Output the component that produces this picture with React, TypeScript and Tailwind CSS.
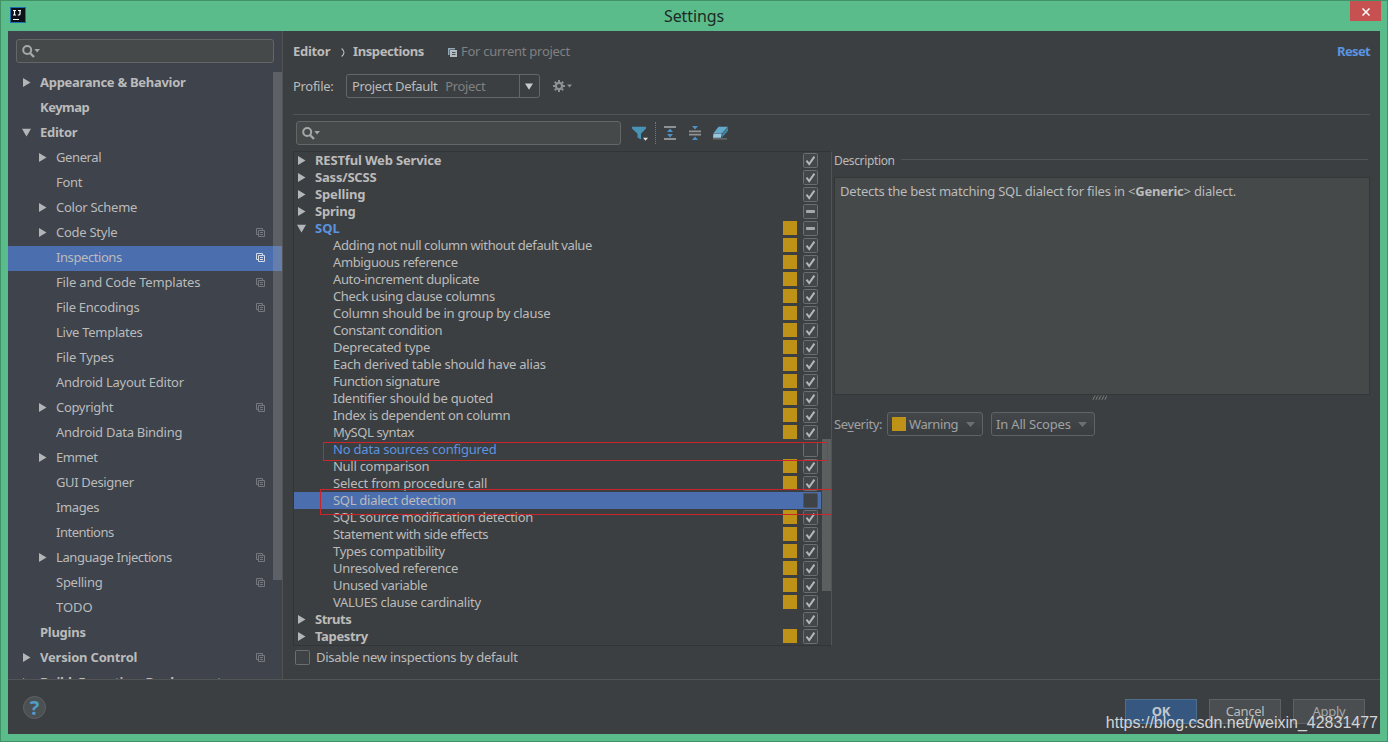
import React from "react";

type Node = { label: string; level: 1 | 2; arrow?: "right" | "down"; copy?: boolean; selected?: boolean; track?: string };

const tree: Node[] = [
  { label: "Appearance & Behavior", level: 1, arrow: "right", track: "tracking-[-0.29px]" },
  { label: "Keymap", level: 1, track: "tracking-[-0.5px]" },
  { label: "Editor", level: 1, arrow: "down" },
  { label: "General", level: 2, arrow: "right", track: "tracking-[-0.4px]" },
  { label: "Font", level: 2 },
  { label: "Color Scheme", level: 2, arrow: "right" },
  { label: "Code Style", level: 2, arrow: "right", copy: true },
  { label: "Inspections", level: 2, copy: true, selected: true, track: "tracking-[-0.42px]" },
  { label: "File and Code Templates", level: 2, copy: true, track: "tracking-[-0.18px]" },
  { label: "File Encodings", level: 2, copy: true },
  { label: "Live Templates", level: 2 },
  { label: "File Types", level: 2, track: "tracking-[-0.15px]" },
  { label: "Android Layout Editor", level: 2 },
  { label: "Copyright", level: 2, arrow: "right", copy: true, track: "tracking-[-0.32px]" },
  { label: "Android Data Binding", level: 2 },
  { label: "Emmet", level: 2, arrow: "right", track: "tracking-[-0.4px]" },
  { label: "GUI Designer", level: 2, copy: true, track: "tracking-[-0.35px]" },
  { label: "Images", level: 2, track: "tracking-[-0.4px]" },
  { label: "Intentions", level: 2, track: "tracking-[-0.5px]" },
  { label: "Language Injections", level: 2, arrow: "right", copy: true, track: "tracking-[-0.42px]" },
  { label: "Spelling", level: 2, copy: true },
  { label: "TODO", level: 2, track: "tracking-normal" },
  { label: "Plugins", level: 1 },
  { label: "Version Control", level: 1, arrow: "right", copy: true, track: "tracking-[-0.2px]" },
  { label: "Build, Execution, Deployment", level: 1, arrow: "right", track: "tracking-[-0.29px]" },
];

type State = "on" | "off" | "mixed";
type Row = { label: string; group?: "right" | "down"; warn?: boolean; state: State; blue?: boolean; selected?: boolean; track?: string };

const rows: Row[] = [
  { label: "RESTful Web Service", group: "right", state: "on", track: "tracking-[-0.16px]" },
  { label: "Sass/SCSS", group: "right", state: "on", track: "tracking-[-0.2px]" },
  { label: "Spelling", group: "right", state: "on", track: "tracking-[-0.15px]" },
  { label: "Spring", group: "right", state: "mixed", track: "tracking-[-0.2px]" },
  { label: "SQL", group: "down", state: "mixed", warn: true, blue: true, track: "tracking-normal" },
  { label: "Adding not null column without default value", warn: true, state: "on", track: "tracking-[-0.38px]" },
  { label: "Ambiguous reference", warn: true, state: "on", track: "tracking-[-0.37px]" },
  { label: "Auto-increment duplicate", warn: true, state: "on", track: "tracking-[-0.37px]" },
  { label: "Check using clause columns", warn: true, state: "on", track: "tracking-[-0.35px]" },
  { label: "Column should be in group by clause", warn: true, state: "on" },
  { label: "Constant condition", warn: true, state: "on", track: "tracking-[-0.38px]" },
  { label: "Deprecated type", warn: true, state: "on" },
  { label: "Each derived table should have alias", warn: true, state: "on", track: "tracking-[-0.22px]" },
  { label: "Function signature", warn: true, state: "on", track: "tracking-[-0.43px]" },
  { label: "Identifier should be quoted", warn: true, state: "on", track: "tracking-[-0.27px]" },
  { label: "Index is dependent on column", warn: true, state: "on", track: "tracking-[-0.31px]" },
  { label: "MySQL syntax", warn: true, state: "on", track: "tracking-[-0.4px]" },
  { label: "No data sources configured", state: "off", blue: true, track: "tracking-[-0.2px]" },
  { label: "Null comparison", warn: true, state: "on", track: "tracking-[-0.27px]" },
  { label: "Select from procedure call", warn: true, state: "on", track: "tracking-[-0.19px]" },
  { label: "SQL dialect detection", state: "off", selected: true, track: "tracking-[-0.28px]" },
  { label: "SQL source modification detection", warn: true, state: "on", track: "tracking-[-0.28px]" },
  { label: "Statement with side effects", warn: true, state: "on", track: "tracking-[-0.38px]" },
  { label: "Types compatibility", warn: true, state: "on", track: "tracking-[-0.3px]" },
  { label: "Unresolved reference", warn: true, state: "on", track: "tracking-[-0.3px]" },
  { label: "Unused variable", warn: true, state: "on", track: "tracking-[-0.33px]" },
  { label: "VALUES clause cardinality", warn: true, state: "on", track: "tracking-[-0.28px]" },
  { label: "Struts", group: "right", state: "on", track: "tracking-[-0.5px]" },
  { label: "Tapestry", group: "right", warn: true, state: "on", track: "tracking-[-0.36px]" },
];

function Arrow({ dir }: { dir?: "right" | "down" }) {
  return (
    <svg className="size-[9px] shrink-0" viewBox="0 0 9 9" fill="#b3b5b7">
      {dir === "right" && <path d="M1 0L8.5 4.5L1 9Z" />}
      {dir === "down" && <path d="M0 .8H9L4.5 8.6Z" />}
    </svg>
  );
}

function CopyIcon({ color }: { color: string }) {
  return (
    <svg className="size-[9px] shrink-0" viewBox="0 0 9 9" fill="none" stroke={color} strokeWidth="1">
      <path d="M2 6.5H.5V.5H6.5V2" />
      <path d="M2.5 2.5H8.5V8.5H2.5ZM4 4.5H7M4 6.5H7" />
    </svg>
  );
}

function ProjectIcon() {
  return (
    <svg className="size-[9px] shrink-0" viewBox="0 0 9 9">
      <path d="M0 0H7V1.5H1.5V7H0Z" fill="#8fa9b8" />
      <path d="M2 2H9V9H2Z" fill="#b4bcc2" />
      <path d="M4 4.5H7.5M4 6.5H7.5" stroke="#4c5357" />
    </svg>
  );
}

function SearchIcon() {
  return (
    <svg className="h-[13px] w-[19px] shrink-0" viewBox="0 0 19 13" fill="none">
      <circle cx="5.2" cy="5" r="4" stroke="#a5a7a9" strokeWidth="2" />
      <path d="M8 8L12 12" stroke="#a5a7a9" strokeWidth="2.4" />
      <path d="M12.3 4H18L15.1 7.6Z" fill="#a5a7a9" />
    </svg>
  );
}

function Check({ state, selected }: { state: State; selected?: boolean }) {
  return (
    <svg className="size-[15px] shrink-0" viewBox="0 0 15 15" fill="none">
      <rect x=".5" y=".5" width="14" height="14" rx="1" fill={state === "off" ? "#3f4346" : "#43474a"} stroke={selected ? "#50545a" : "#6b6e70"} />
      {state === "on" && <path d="M3.5 7.6L6.2 11L11.4 3.6" stroke="#b4b6b8" strokeWidth="2" />}
      {state === "mixed" && <rect x="3" y="6" width="9" height="3" rx="1" fill="#a6a8aa" />}
    </svg>
  );
}

function TitleBar() {
  return (
    <div className="relative flex h-[30px] shrink-0 items-center justify-center text-[16px] tracking-[-0.1px] text-[#1c2b25]">
      <svg className="absolute top-1.5 left-[9px] size-4" viewBox="0 0 16 16">
        <rect x=".5" y=".5" width="15" height="15" fill="#0c1118" stroke="#1b6fae" />
        <path d="M3 3.5H6M4.5 3.5V8M3 8H6M8 3.5H11M10 3.5V7Q10 8 8.8 8H7.8M3 12.5H9" stroke="#fff" strokeWidth="1.2" fill="none" />
      </svg>
      <span>Settings</span>
      <div className="absolute top-0 right-1.5 flex h-5 w-[31px] items-center justify-center bg-[#c75050]">
        <svg className="mt-0.5 size-[8px]" viewBox="0 0 8 8" stroke="#fff" strokeWidth="1.5"><path d="M.5 .5L7.5 7.5M7.5 .5L.5 7.5" /></svg>
      </div>
    </div>
  );
}

function Sidebar() {
  return (
    <aside className="relative flex w-[275px] shrink-0 flex-col overflow-hidden border-r border-[#515355] bg-[#3e434c]">
      <div className="mx-2 mt-2 mb-2 flex h-6 w-[258px] shrink-0 items-center rounded-[3px] border border-[#646668] bg-[#45494a] pl-[5px]">
        <SearchIcon />
      </div>
      {tree.map((n) => (
        <div
          key={n.label}
          className={`flex h-[25px] shrink-0 items-center pb-0.5 pr-[17px] ${n.level === 1 ? "pl-3.5 font-bold" : "pl-[30px]"} ${n.selected ? "bg-[#4b6eaf]" : ""}`}
        >
          <Arrow dir={n.arrow} />
          <span className={`ml-[9px] flex-1 whitespace-nowrap ${n.track ?? "tracking-[-0.26px]"}`}>{n.label}</span>
          {n.copy && <CopyIcon color={n.selected ? "#d5dbe6" : "#75797f"} />}
        </div>
      ))}
      <div className="absolute top-[41px] right-0 h-[508px] w-[9px] bg-[#a6a6a6]/30" />
    </aside>
  );
}

function InspectionList() {
  return (
    <div className="relative h-[495px] w-[539px] border border-[#323435] border-r-[#515355]">
      {rows.map((r) => (
        <div
          key={r.label}
          className={`flex h-[17px] w-[527px] items-center pr-[3px] ${r.group ? "pl-[3px] font-bold" : "pl-[39px]"} ${r.selected ? "bg-[#4b6eaf]" : ""} ${r.blue ? "text-[#5a94e0]" : ""}`}
        >
          {r.group && <span className="mr-[9px] flex"><Arrow dir={r.group} /></span>}
          <span className={`flex-1 leading-[17px] whitespace-nowrap ${r.track ?? "tracking-[-0.25px]"}`}>{r.label}</span>
          {r.warn && <span className="mr-1.5 mb-px size-3.5 bg-[#be9117]" />}
          <Check state={r.state} selected={r.selected} />
        </div>
      ))}
      <div className="absolute top-[287px] right-0 h-[152px] w-[9px] bg-[#5b5f60]" />
      <div className="absolute top-[290px] left-[29px] h-[19px] w-[505px] border border-[#c9252b]" />
      <div className="absolute top-[337px] left-[26px] h-[26px] w-[512px] border border-[#c9252b]" />
    </div>
  );
}

function Toolbar() {
  return (
    <div className="mt-1.5 ml-[3px] flex h-6 items-center">
      <div className="flex h-6 w-[325px] items-center rounded-[3px] border border-[#646668] bg-[#45494a] pl-[5px]">
        <SearchIcon />
      </div>
      <svg className="ml-[11px] h-[15px] w-4" viewBox="0 0 16 15">
        <path d="M0 .8H14V2.6L9 7.8V13.4L5.5 11.4V7.8L0 2.6Z" fill="#4793b5" />
        <path d="M11 11.8H16L13.5 14.8Z" fill="#e0e2e3" />
      </svg>
      <div className="ml-[7px] h-[22px] w-px border-l border-dotted border-[#747677]" />
      <svg className="ml-2 h-[14px] w-3" viewBox="0 0 12 14">
        <path d="M0 0H12V2H0ZM0 12H12V14H0Z" fill="#8f9193" />
        <path d="M6 2.6L9 6H3ZM3 8H9L6 11.4Z" fill="#4d8fc4" />
      </svg>
      <svg className="ml-[13px] h-[14px] w-3" viewBox="0 0 12 14">
        <path d="M0 4.4H12V6.2H0ZM0 7.8H12V9.6H0Z" fill="#8f9193" />
        <path d="M3 0H9L6 3.6ZM6 10.4L9 14H3Z" fill="#4d8fc4" />
      </svg>
      <svg className="ml-3 h-[14px] w-[15px]" viewBox="0 0 15 14">
        <path d="M5.5 .8H15L9.3 7H.7Z" fill="#62a9cc" />
        <path d="M.5 7.6H8.8L8 11.8H0Z" fill="#97c8e0" />
        <path d="M9.5 7.5L15 1.6V4.8L8.7 11.8Z" fill="#3f86ab" />
        <path d="M0 12.5H14V13.3H0Z" fill="#8d8f90" />
      </svg>
    </div>
  );
}

function Combo({ children, className }: { children: React.ReactNode; className: string }) {
  return (
    <div className={`flex h-6 items-center rounded-[3px] border border-[#606264] bg-linear-to-b from-[#434749] to-[#3b3e40] text-[#9fa1a3] ${className}`}>
      {children}
      <svg className="ml-auto h-[5px] w-[9px]" viewBox="0 0 9 5" fill="#6d6f71"><path d="M0 0H9L4.5 5Z" /></svg>
    </div>
  );
}

function Details() {
  return (
    <section className="ml-0.5 flex w-[536px] flex-col">
      <div className="flex h-[18px] items-center">
        <span className="pt-0.5 text-[12px] tracking-[-0.36px]">Description</span>
        <span className="mr-0.5 mb-px ml-1.5 h-px flex-1 bg-[#515355]" />
      </div>
      <div className="mt-2 h-[218px] border border-[#343637] bg-[#45494a] px-[5px] pt-[5px] leading-[17px] tracking-[-0.21px]">
        Detects the best matching SQL dialect for files in &lt;<b>Generic</b>&gt; dialect.
      </div>
      <svg className="ml-[258px] h-[5px] w-[15px]" viewBox="0 0 15 5" stroke="#a8aaab" strokeWidth="1">
        <path d="M1 4.5L3 .5M4 4.5L6 .5M7 4.5L9 .5M10 4.5L12 .5M13 4.5L15 .5" strokeDasharray="1.2 .8" />
      </svg>
      <div className="mt-3 flex items-center text-[#9fa1a3]">
        <span className="w-[53px] pt-px tracking-[-0.4px]">Se<u className="underline-offset-2">v</u>erity:</span>
        <Combo className="w-24 pr-[7px] pl-1">
          <span className="mr-[3px] size-3.5 bg-[#be9117]" />
          <span className="pt-px tracking-[-0.4px]">Warning</span>
        </Combo>
        <Combo className="ml-2 w-[104px] pr-[7px] pl-1">
          <span className="pt-px tracking-[-0.18px]">In All Scopes</span>
        </Combo>
      </div>
    </section>
  );
}

function Main() {
  return (
    <main className="flex min-w-0 flex-1 flex-col pr-2.5 pl-2.5">
      <div className="mt-[11px] flex h-5 items-center font-bold">
        <span className="w-[37px] tracking-[-0.3px]">Editor</span>
        <svg className="mr-2 ml-[11px] h-[9px] w-1" viewBox="0 0 4 9" fill="none" stroke="#bbb" strokeWidth="1.1"><path d="M.6 .5Q3 2.5 3 4.5Q3 6.5 .6 8.5" /></svg>
        <span className="w-[71px] tracking-[-0.4px]">Inspections</span>
        <span className="mr-1 ml-6 flex"><ProjectIcon /></span>
        <span className="font-normal tracking-[-0.27px] text-[#7f8183]">For current project</span>
        <span className="ml-auto tracking-[-0.65px] text-[#5a94e0]">Reset</span>
      </div>
      <div className="mt-3 flex h-6 items-center">
        <span className="w-[53px] pt-px tracking-[-0.3px]">Profile:</span>
        <div className="flex h-6 w-[194px] items-center rounded-[3px] border border-[#646668]">
          <span className="w-[173px] border-r border-[#646668] pl-[5px] leading-[22px] tracking-[-0.35px] whitespace-nowrap">
            Project Default<span className="ml-2 text-[#7f8183]">Project</span>
          </span>
          <svg className="ml-[5px] h-[7px] w-2" viewBox="0 0 8 7" fill="#c8cacb"><path d="M0 .5H8L4 6.8Z" /></svg>
        </div>
        <svg className="ml-[13px] h-3 w-5" viewBox="0 0 20 12">
          <g fill="none" stroke="#8e9092">
            <circle cx="6" cy="6" r="3.1" strokeWidth="2.2" />
            <path d="M6 0V2M6 10V12M0 6H2M10 6H12M1.8 1.8L3.2 3.2M8.8 8.8L10.2 10.2M10.2 1.8L8.8 3.2M3.2 8.8L1.8 10.2" strokeWidth="2" />
          </g>
          <path d="M14 4.6H19L16.5 7.4Z" fill="#8e9092" />
        </svg>
      </div>
      <div className="mt-4 h-px shrink-0 bg-[#515355]" />
      <Toolbar />
      <div className="mt-1.5 flex">
        <InspectionList />
        <Details />
      </div>
      <div className="mt-1 ml-0.5 flex items-center gap-1.5">
        <Check state="off" />
        <span className="leading-[15px] tracking-[-0.27px]">Disable new inspections by default</span>
      </div>
    </main>
  );
}

function Footer() {
  const button = "flex h-[25px] w-[72px] items-center justify-center border tracking-[-0.3px]";
  return (
    <footer className="flex h-[55px] shrink-0 items-start border-t border-[#515355] pr-[15px] pl-[15px]">
      <div className="mt-4 flex size-[23px] items-center justify-center rounded-full border border-[#5f6365] bg-[#4b5053] text-[20px] font-bold text-[#529cc6]">?</div>
      <div className="mt-[19px] ml-auto flex gap-3">
        <div className={`${button} border-[#4c708c] bg-[#365880] font-bold text-[#c4c8ce]`}>OK</div>
        <div className={`${button} border-[#5e6062] bg-[#4a4e50]`}>Cancel</div>
        <div className={`${button} border-[#5e6062] bg-[#4a4e50] text-[#a4a6a8]`}>Apply</div>
      </div>
    </footer>
  );
}

export default function App() {
  return (
    <div className="relative flex h-[742px] w-[1388px] flex-col overflow-hidden border border-[#429268] bg-[#5bbc8b] font-['Noto_Sans','Noto_Sans_CJK_SC',sans-serif] text-[13px] text-[#bbbbbb]">
      <TitleBar />
      <div className="mx-[7px] flex h-[703px] flex-col bg-[#3c3f41]">
        <div className="flex h-[648px] overflow-hidden">
          <Sidebar />
          <Main />
        </div>
        <Footer />
      </div>
      <div className="absolute right-[9px] bottom-[9px] font-['Liberation_Sans',sans-serif] text-[16px] leading-[19px] whitespace-nowrap text-[#d3d4d5]">
        https://blog.csdn.net/weixin_42831477
      </div>
    </div>
  );
}
